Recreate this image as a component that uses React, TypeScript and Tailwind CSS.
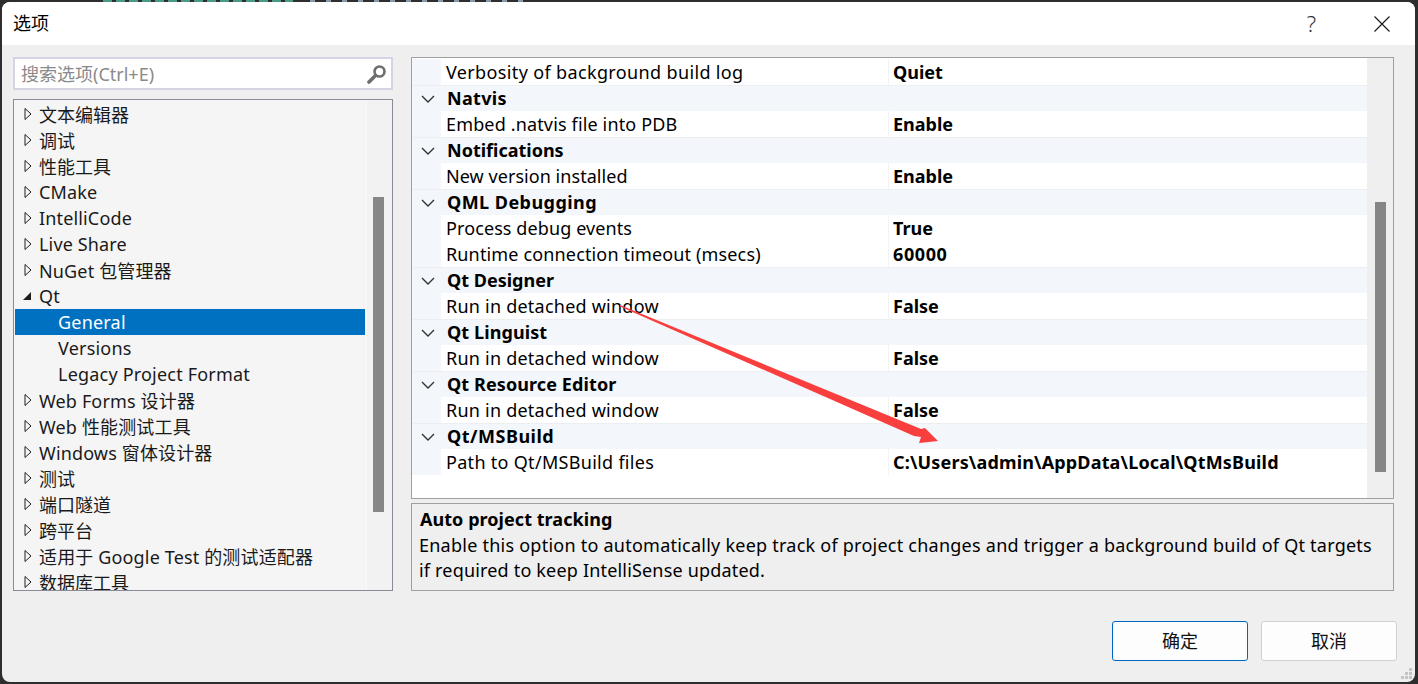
const fontStack = { fontFamily: '"Noto Sans", "Noto Sans CJK SC", sans-serif' };

const treeItems = [
  { label: "文本编辑器" },
  { label: "调试" },
  { label: "性能工具" },
  { label: "CMake" },
  { label: "IntelliCode" },
  { label: "Live Share" },
  { label: "NuGet 包管理器" },
  { label: "Qt", open: true },
  { label: "General", child: true, selected: true },
  { label: "Versions", child: true },
  { label: "Legacy Project Format", child: true },
  { label: "Web Forms 设计器" },
  { label: "Web 性能测试工具" },
  { label: "Windows 窗体设计器" },
  { label: "测试" },
  { label: "端口隧道" },
  { label: "跨平台" },
  { label: "适用于 Google Test 的测试适配器" },
  { label: "数据库工具" },
];

// fit: letter spacing per row, the stand-in font runs narrower than the original
const gridRows: { label: string; value?: string; fit: string; valueFit?: string }[] = [
  { label: "Verbosity of background build log", value: "Quiet", fit: "tracking-[0.36px]" },
  { label: "Natvis", fit: "tracking-[0.3px]" },
  { label: "Embed .natvis file into PDB", value: "Enable", fit: "tracking-[0.15px]" },
  { label: "Notifications", fit: "tracking-[0px]" },
  { label: "New version installed", value: "Enable", fit: "tracking-[0.05px]" },
  { label: "QML Debugging", fit: "tracking-[0.45px]" },
  { label: "Process debug events", value: "True", fit: "tracking-[0.1px]" },
  { label: "Runtime connection timeout (msecs)", value: "60000", fit: "tracking-[0.15px]", valueFit: "tracking-[0.6px]" },
  { label: "Qt Designer", fit: "tracking-[0px]" },
  { label: "Run in detached window", value: "False", fit: "tracking-[0.23px]" },
  { label: "Qt Linguist", fit: "tracking-[0.1px]" },
  { label: "Run in detached window", value: "False", fit: "tracking-[0.23px]" },
  { label: "Qt Resource Editor", fit: "tracking-[0.1px]" },
  { label: "Run in detached window", value: "False", fit: "tracking-[0.23px]" },
  { label: "Qt/MSBuild", fit: "tracking-[0.5px]" },
  { label: "Path to Qt/MSBuild files", value: "C:\\Users\\admin\\AppData\\Local\\QtMsBuild", fit: "tracking-[0.3px]", valueFit: "tracking-[0.16px]" },
];

function TreeArrow({ open }: { open?: boolean }) {
  if (open) {
    return (
      <svg width="10" height="10" viewBox="0 0 10 10" className="shrink-0">
        <path d="M9 1V9H1Z" fill="#1e1e1e" />
      </svg>
    );
  }
  return (
    <svg width="8" height="14" viewBox="0 0 8 14" className="shrink-0">
      <path d="M1 1.5L7 7L1 12.5Z" fill="none" stroke="#1e1e1e" strokeWidth="1" />
    </svg>
  );
}

function Chevron() {
  return (
    <svg width="14" height="8" viewBox="0 0 14 8" className="shrink-0">
      <path d="M1 1L7 7L13 1" fill="none" stroke="#333" strokeWidth="1.4" />
    </svg>
  );
}

function TreeRow({ item }: { item: (typeof treeItems)[number] }) {
  const hasLatin = /[a-zA-Z]/.test(item.label);
  const hasCjk = /[^\x00-\x7f]/.test(item.label);
  if (item.child) {
    return (
      <div
        className={`flex h-[26px] shrink-0 items-center pl-[43px] tracking-[0.2px] ${
          item.selected ? "bg-[#0070c0] text-white" : "text-[#1a1a1a]"
        }`}
      >
        {item.label}
      </div>
    );
  }
  return (
    <div className="flex h-[26px] shrink-0 items-center text-[#1a1a1a]">
      <span className="flex w-[24px] shrink-0 justify-end pr-[7px]">
        <TreeArrow open={item.open} />
      </span>
      <span className={`${hasLatin ? "tracking-[0.15px]" : ""} ${hasCjk ? "pt-[2px]" : ""}`}>{item.label}</span>
    </div>
  );
}

function GridRow({ row }: { row: (typeof gridRows)[number] }) {
  if (!row.value) {
    return (
      <div className={`flex h-[26px] shrink-0 items-center border-t border-[#eceef2] bg-[#f3f6fb] font-bold text-black ${row.fit}`}>
        <span className="flex w-[35px] shrink-0 justify-start pl-[9px]">
          <Chevron />
        </span>
        {row.label}
      </div>
    );
  }
  return (
    <div className="flex h-[26px] shrink-0 bg-[#f3f6fb]">
      <div className="ml-[29px] flex flex-1 items-center bg-white text-black">
        <span className={`w-[448px] shrink-0 border-r border-[#f3f3f6] pl-[5px] leading-[26px] ${row.fit}`}>{row.label}</span>
        <span className={`pl-[4px] font-bold ${row.valueFit ?? ""}`}>{row.value}</span>
      </div>
    </div>
  );
}

function Button({ label, primary }: { label: string; primary?: boolean }) {
  return (
    <button
      className={`h-[40px] w-[136px] rounded-[3px] border bg-[#fdfdfd] text-[#111] ${
        primary ? "border-[#0067c0]" : "border-[#d0d0d0]"
      }`}
    >
      {label}
    </button>
  );
}

export default function App() {
  return (
    <div className="relative h-[684px] w-[1418px] overflow-hidden bg-[#2e2e2e] p-[2px]" style={fontStack}>
      {/* Code editor behind the dialog, only its last pixels show above the title bar */}
      <svg width="1418" height="2" viewBox="0 0 1418 2" className="absolute left-0 top-0">
        <path d="M103 1h190" stroke="#4a9a88" strokeWidth="2" strokeDasharray="9 4" />
        <path d="M310 1h218" stroke="#8a98a8" strokeWidth="2" strokeDasharray="5 11" />
      </svg>
      <div className="relative flex h-[680px] w-[1413px] flex-col overflow-hidden rounded-[8px] bg-[#efefef] text-[18px]">
        {/* Title bar */}
        <div className="flex h-[43px] shrink-0 items-center bg-white pl-[11px] pr-[25px] text-black">
          <span className="flex-1">选项</span>
          <span className="mr-[58px] text-[22px] font-light text-[#333]">?</span>
          <svg width="16" height="16" viewBox="0 0 16 16">
            <path d="M0.5 0.5L15.5 15.5M15.5 0.5L0.5 15.5" stroke="#1a1a1a" strokeWidth="1.2" />
          </svg>
        </div>

        <div className="flex gap-[18px] pl-[11px] pt-[12px]">
          {/* Left column */}
          <div className="flex w-[380px] flex-col gap-[9px]">
            <div className="flex h-[33px] items-center justify-between border-2 border-[#d4d4e4] bg-white pl-[6px] pr-[4px] text-[#8a8a8a]">
              <span className="pt-[2px]">搜索选项(Ctrl+E)</span>
              <svg width="20" height="20" viewBox="0 0 20 20">
                <circle cx="12.5" cy="7.5" r="5" fill="none" stroke="#6e6e6e" strokeWidth="2.6" />
                <path d="M8.5 11.5L2 18" stroke="#6e6e6e" strokeWidth="3.6" strokeLinecap="round" />
              </svg>
            </div>
            <div className="flex h-[492px] overflow-hidden border border-[#8a8a98] bg-[#f5f5f5]">
              <div className="flex w-[351px] shrink-0 flex-col overflow-hidden pl-px pt-px">
                {treeItems.map((item) => (
                  <TreeRow key={item.label} item={item} />
                ))}
              </div>
              <div className="ml-[1px] flex-1 border-l border-[#fafafa] bg-[#f2f2f2] pl-[6px] pt-[97px]">
                <div className="h-[315px] w-[11px] bg-[#868686]" />
              </div>
            </div>
          </div>

          {/* Right column */}
          <div className="flex w-[983px] flex-col gap-[4px]">
            <div className="flex h-[442px] overflow-hidden border border-[#a0a0a0] bg-white">
              <div className="flex w-[955px] shrink-0 flex-col pt-px">
                {gridRows.map((row, i) => (
                  <GridRow key={i} row={row} />
                ))}
              </div>
              <div className="flex-1 bg-[#efefef] pl-[8px] pt-[144px]">
                <div className="h-[270px] w-[11px] bg-[#868686]" />
              </div>
            </div>
            <div className="h-[88px] border border-[#a0a0a0] pl-[7px] pt-[3px] leading-[25.5px] text-black">
              <div className="pl-px font-bold tracking-[0.05px]">Auto project tracking</div>
              <div className="whitespace-nowrap tracking-[0.24px]">Enable this option to automatically keep track of project changes and trigger a background build of Qt targets</div>
              <div className="tracking-[0.18px]">if required to keep IntelliSense updated.</div>
            </div>
          </div>
        </div>

        {/* Footer */}
        <div className="flex justify-end gap-[13px] pr-[18px] pt-[30px]">
          <Button label="确定" primary />
          <Button label="取消" />
        </div>

        {/* Resize grip */}
        <svg width="12" height="12" viewBox="0 0 12 12" className="absolute bottom-[2px] right-[2px]">
          <path d="M8 0h3v3H8zM4 4h3v3H4zM8 4h3v3H8zM0 8h3v3H0zM4 8h3v3H4zM8 8h3v3H8z" fill="#c4c4c4" />
        </svg>

        {/* Annotation arrow */}
        <svg width="1413" height="680" viewBox="0 0 1413 680" className="pointer-events-none absolute left-0 top-0">
          <path d="M618 303L919 427L923 426L936 439L917 441L919 435L912 434L618 304.5Z" fill="#f93e3e" />
        </svg>
      </div>
    </div>
  );
}
